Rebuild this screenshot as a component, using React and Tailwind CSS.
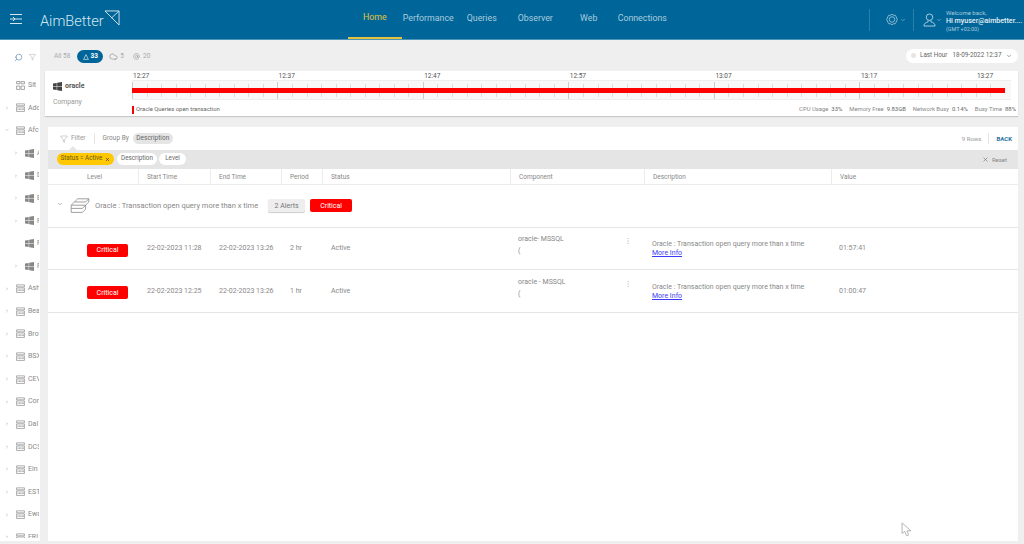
import { Search, Filter, ChevronDown, ChevronRight, X, MoreVertical, Cloud, AtSign } from 'lucide-react'

const NAV = [
  { label: 'Home', active: true },
  { label: 'Performance' },
  { label: 'Queries' },
  { label: 'Observer' },
  { label: 'Web' },
  { label: 'Connections' },
]

const TREE = [
  { name: 'Sit', icon: 'grid', noArrow: true },
  { name: 'Adc', icon: 'server' },
  { name: 'Afc', icon: 'server', open: true },
  { name: 'A', icon: 'win', sub: true },
  { name: 'D', icon: 'win', sub: true },
  { name: 'E', icon: 'win', sub: true },
  { name: 'F', icon: 'win', sub: true },
  { name: 'F', icon: 'win', sub: true, noArrow: true },
  { name: 'F', icon: 'win', sub: true },
  { name: 'Ash', icon: 'server' },
  { name: 'Bea', icon: 'server' },
  { name: 'Bro', icon: 'server' },
  { name: 'BSX', icon: 'server' },
  { name: 'CEV', icon: 'server' },
  { name: 'Con', icon: 'server' },
  { name: 'Dal', icon: 'server' },
  { name: 'DCS', icon: 'server' },
  { name: 'Ein', icon: 'server' },
  { name: 'EST', icon: 'server' },
  { name: 'Ewa', icon: 'server' },
  { name: 'FRI', icon: 'server' },
]

const TIMES = ['12:27', '12:37', '12:47', '12:57', '13:07', '13:17', '13:27']

const ROWS = [
  { start: '22-02-2023 11:28', end: '22-02-2023 13:26', period: '2 hr', comp: 'oracle- MSSQL', value: '01:57:41' },
  { start: '22-02-2023 12:25', end: '22-02-2023 13:26', period: '1 hr', comp: 'oracle - MSSQL', value: '01:00:47' },
]

const GRID = 'grid grid-cols-[90px_72px_71px_41px_188px_134px_187px_1fr]'

function WinIcon({ className }) {
  return (
    <svg viewBox="0 0 16 16" className={className} fill="currentColor">
      <path d="M0 2.6 6.6 1.6V7.5H0ZM7.4 1.5 16 0V7.5H7.4ZM0 8.4H6.6V14.4L0 13.4ZM7.4 8.4H16V16L7.4 14.6Z" />
    </svg>
  )
}

function ServerIcon() {
  return (
    <svg viewBox="0 0 16 16" className="w-[9px] h-[9px] shrink-0 text-[#888]" fill="none" stroke="currentColor" strokeWidth="1.2">
      <path d="M1 1.5H15V5H1ZM1 7H15V15H1Z" />
      <path d="M3.5 9.5V12.5M6 9.5V12.5M8.5 9.5V12.5M11 9.5V12.5M13 9.5V12.5" />
    </svg>
  )
}

function GridIcon() {
  return (
    <svg viewBox="0 0 16 16" className="w-[9px] h-[9px] shrink-0 text-[#888]" fill="none" stroke="currentColor" strokeWidth="1.3">
      <path d="M1 1H7V5H1ZM9 1H15V5H9ZM1 9H7V15H1ZM9 9H15V15H9Z" />
    </svg>
  )
}

function LayersIcon() {
  return (
    <svg viewBox="0 0 24 20" className="w-[20px] h-[16px] text-[#888]" fill="none" stroke="currentColor" strokeWidth="1">
      <path d="M6 4 9 1H23L19 5H5ZM5 5 1 9H19L23 5M1 9 1 13H15L19 9M1 13V18H15L19 14V9M23 1V5" />
    </svg>
  )
}

function GearIcon() {
  return (
    <svg viewBox="0 0 24 24" className="w-[12px] h-[13px] shrink-0 text-[#a9cbdd]" fill="none" stroke="currentColor" strokeWidth="1.6">
      <path d="M12 1.5 15 3.5H18.5L20.3 6.6 22.5 12 20.3 17.4 18.5 20.5H15L12 22.5 9 20.5H5.5L3.7 17.4 1.5 12 3.7 6.6 5.5 3.5H9Z" />
      <circle cx="12" cy="12" r="5.5" />
    </svg>
  )
}

function UserIcon() {
  return (
    <svg viewBox="0 0 14 15" className="w-[13px] h-[14px] shrink-0 text-[#b5d3e3]" fill="none" stroke="currentColor" strokeWidth="1">
      <circle cx="7" cy="4.5" r="3.5" />
      <path d="M5.5 8V9.5C3 10 1 11.5 1 14H13C13 11.5 11 10 8.5 9.5V8" />
    </svg>
  )
}

function Logo() {
  return (
    <div className="flex items-start ml-[17px] text-[#d5e6ef]">
      <span className="text-[14.6px] leading-[18px] font-light mt-[12px]">AimBetter</span>
      <svg viewBox="0 0 17 17" className="w-[16px] h-[16px] mt-[10px]" fill="none" stroke="currentColor" strokeWidth="1">
        <path d="M1 1H16V16L1 1M16 1 8 8.5" />
      </svg>
    </div>
  )
}

function Header() {
  return (
    <header className="h-[40px] shrink-0 bg-[#006699] border-b border-[#4d94b8] flex">
      <div className="w-[348px] shrink-0 flex">
        <div className="ml-[9px] mt-[13px] text-[#d5e6ef]">
          <svg viewBox="0 0 14 12" className="w-[14px] h-[12px]" fill="none" stroke="currentColor" strokeWidth="1">
            <path d="M1 1.5H13M6 6H13M1 10.5H13M1 6H6M4 4 6 6 4 8" />
          </svg>
        </div>
        <Logo />
      </div>
      <nav className="flex">
        {NAV.map(n => (
          <div
            key={n.label}
            className={`w-[53.5px] h-[39px] flex items-center justify-center whitespace-nowrap text-[8.8px] pb-[1px] ${n.active ? 'text-[#e4c33c] border-b-2 border-[#e4c33c]' : 'text-[#a9cbdd]'}`}
          >
            {n.label}
          </div>
        ))}
      </nav>
      <div className="flex-1" />
      <div className="flex items-center w-[155px] shrink-0">
        <div className="h-[22px] w-px bg-[#2b7fa8] mr-[16px]" />
        <GearIcon />
        <ChevronDown className="w-[6px] h-[6px] shrink-0 text-[#a9cbdd] ml-[2px]" />
        <div className="h-[22px] w-px bg-[#2b7fa8] ml-[7px] mr-[9px]" />
        <UserIcon />
        <ChevronDown className="w-[6px] h-[6px] shrink-0 text-[#a9cbdd] mr-[4px]" />
        <div className="flex flex-col leading-[8px] whitespace-nowrap mt-[2px]">
          <span className="text-[6px] text-[#a9cbdd]">Welcome back,</span>
          <span className="text-[7.1px] text-[#e8f1f6] font-medium">Hi myuser@aimbetter....</span>
          <span className="text-[5.4px] text-[#a9cbdd]">(GMT +02:00)</span>
        </div>
      </div>
    </header>
  )
}

function Sidebar() {
  return (
    <aside className="w-[40px] shrink-0 bg-white mb-[3px] overflow-hidden">
      <div className="flex items-center gap-[6px] pl-[14px] h-[32px] mt-[1px]">
        <Search className="w-[9px] h-[9px] text-[#4d7fb0] -scale-x-100" strokeWidth={1.6} />
        <Filter className="w-[7px] h-[8px] text-[#888]" strokeWidth={1.2} />
      </div>
      <div className="h-[464px] mt-[1px] overflow-hidden">
        {TREE.map((t, i) => (
          <div key={i} className={`h-[22.6px] w-[38.5px] overflow-hidden flex items-center whitespace-nowrap ${t.sub ? 'pl-[14px]' : 'pl-[5px]'}`}>
            <span className="w-[11px] shrink-0">
              {!t.noArrow && (t.open
                ? <ChevronDown className="w-[4px] h-[4px] text-[#999]" strokeWidth={3} />
                : <ChevronRight className="w-[4px] h-[4px] text-[#999]" strokeWidth={3} />)}
            </span>
            {t.icon === 'grid' && <GridIcon />}
            {t.icon === 'server' && <ServerIcon />}
            {t.icon === 'win' && <WinIcon className="w-[9px] h-[9px] shrink-0 text-[#888]" />}
            <span className="text-[7px] text-[#888] ml-[3px]">{t.name}</span>
          </div>
        ))}
      </div>
    </aside>
  )
}

function TopStrip() {
  return (
    <div className="h-[31px] shrink-0 flex items-center pt-[2px] pl-[14px] pr-[6px] text-[6.5px] text-[#aaa]">
      <span>All 58</span>
      <span className="ml-[7px] w-[26px] h-[13px] rounded-full bg-[#006699] text-white flex items-center justify-center gap-[2px] font-bold">
        <svg viewBox="0 0 10 10" className="w-[6px] h-[6px]" fill="none" stroke="currentColor"><path d="M5 1 9 9H1Z" /></svg>
        33
      </span>
      <Cloud className="w-[9px] h-[9px] ml-[6px] mr-[2px] text-[#999]" />
      <span>5</span>
      <AtSign className="w-[7px] h-[7px] ml-[9px] mr-[3px] text-[#999]" />
      <span>20</span>
      <div className="flex-1" />
      <div className="w-[112px] h-[14px] -mt-[2px] rounded-full bg-white flex items-center pl-[5px] text-[#666] text-[6.3px] whitespace-nowrap">
        <span className="w-[5px] h-[5px] rounded-full bg-[#e5e5e5] mr-[4px]" />
        <span>Last Hour</span>
        <span className="ml-[5px]">18-09-2022 12:37</span>
        <ChevronDown className="w-[6px] h-[6px] ml-[5px]" strokeWidth={2.4} />
      </div>
    </div>
  )
}

function Timeline() {
  return (
    <div className="flex-1 min-w-0">
      <div className="flex h-[9px] text-[6.5px] leading-[10px] pl-[1px] text-[#555]">
        {TIMES.map((t, i) => (
          <span key={t} className={i === 6 ? 'w-[30px] -ml-[29.6px]' : 'w-[145.6px]'}>{t}</span>
        ))}
      </div>
      <div className="relative h-[20px] w-[879px] bg-[#f8f8f8] border-y border-[#eeeeee] flex items-center">
        {Array.from({ length: 60 }, (_, i) => (
          <div key={i} className="w-[14.56px] shrink-0 flex items-center">
            <div className={`w-px ${i % 10 === 0 ? 'h-[17px] bg-[#cccccc]' : 'h-[13px] bg-[#dcdcdc]'}`} />
          </div>
        ))}
        <div className="absolute left-0 top-[6.5px] h-[5px] w-[873px] bg-[#ff0000]" />
      </div>
      <div className="flex items-center h-[16px] pt-[3px] text-[5.9px] text-[#888] whitespace-nowrap">
        <span className="w-[2px] h-[8px] bg-[#ff0000] mr-[2px]" />
        <span className="text-[#666]">Oracle Queries open transaction</span>
        <div className="flex-1" />
        <div className="flex gap-[7px] pr-[2px]">
          <span>CPU Usage&nbsp; <span className="text-[#666]">33%</span></span>
          <span>Memory Free&nbsp; <span className="text-[#666]">9.83GB</span></span>
          <span>Network Busy&nbsp; <span className="text-[#666]">0.14%</span></span>
          <span>Busy Time&nbsp; <span className="text-[#666]">88%</span></span>
        </div>
      </div>
    </div>
  )
}

function CompanyCard() {
  return (
    <div className="h-[45px] shrink-0 ml-[5px] mr-[6px] bg-white shadow-[0_1px_1px_#c8c8c8] flex">
      <div className="w-[87px] shrink-0 pl-[8px] pt-[10px]">
        <div className="flex items-center gap-[3px]">
          <WinIcon className="w-[9px] h-[9px] text-[#444]" />
          <span className="text-[7px] font-bold text-[#555]">oracle</span>
        </div>
        <div className="text-[6.8px] text-[#999] mt-[5px]">Company</div>
      </div>
      <Timeline />
    </div>
  )
}

function FilterBar() {
  return (
    <div className="relative h-[23px] shrink-0 flex items-center text-[6.5px] text-[#888]">
      <Filter className="w-[8px] h-[8px] ml-[12px] text-[#888]" strokeWidth={1.2} />
      <span className="ml-[3px] text-[#999]">Filter</span>
      <span className="w-px h-[11px] bg-[#e5e5e5] ml-[8px]" />
      <span className="ml-[8px]">Group By</span>
      <span className="ml-[4px] w-[40px] h-[11px] rounded-full bg-[#e5e5e5] flex items-center justify-center text-[#666]">Description</span>
      <div className="flex-1" />
      <span className="text-[6px] text-[#999]">9 Rows</span>
      <span className="w-px h-[11px] bg-[#e5e5e5] mx-[7px]" />
      <span className="text-[6px] font-bold text-[#2a6f9e] mr-[6px]">BACK</span>
      <span className="absolute left-[21px] bottom-0 w-0 h-0 border-x-[4px] border-x-transparent border-b-[4px] border-b-[#e5e5e5]" />
    </div>
  )
}

function ChipsBar() {
  return (
    <div className="h-[19px] shrink-0 bg-[#e5e5e5] flex items-center pb-[1px] pl-[9px] pr-[11px] text-[6.3px] text-[#666] whitespace-nowrap">
      <span className="h-[12px] w-[57px] rounded-full bg-[#ffc800] flex items-center justify-center gap-[3px] text-[#6b5a10]">
        Status = Active <X className="w-[5px] h-[5px] text-[#333]" strokeWidth={3} />
      </span>
      <span className="h-[12px] w-[40px] rounded-full bg-white flex items-center justify-center ml-[3px]">Description</span>
      <span className="h-[12px] w-[27px] rounded-full bg-white flex items-center justify-center ml-[2px]">Level</span>
      <div className="flex-1" />
      <X className="w-[7px] h-[7px] text-[#555]" strokeWidth={1.6} />
      <span className="ml-[3px] text-[6px] text-[#888]">Reset</span>
    </div>
  )
}

function HeadCell({ children, first }) {
  return (
    <div className={`h-[15px] pt-[2px] flex items-center text-[6.5px] text-[#888] ${first ? 'pl-[39px]' : 'pl-[8px] border-l border-[#ececec]'}`}>
      {children}
    </div>
  )
}

function Critical({ className }) {
  return (
    <span className={`h-[13px] rounded-[2px] bg-[#ff0000] text-white text-[7px] flex items-center justify-center ${className}`}>Critical</span>
  )
}

function AlertRow({ r }) {
  return (
    <div className={`${GRID} h-[42.5px] border-b border-[#e6e6e6] text-[7px] text-[#888] items-center`}>
      <div className="pl-[39px]"><Critical className="w-[41px] mt-[4px]" /></div>
      <div className="pl-[9px]">{r.start}</div>
      <div className="pl-[9px]">{r.end}</div>
      <div className="pl-[9px]">{r.period}</div>
      <div className="pl-[9px]">Active</div>
      <div className="pl-[8px] flex leading-[12px] -mt-[6px]">
        <div className="w-[106px]">
          <div>{r.comp}</div>
          <div>(</div>
        </div>
        <MoreVertical className="w-[8px] h-[10px] text-[#ccc] mt-[3px]" />
      </div>
      <div className="pl-[8px] leading-[9px] mt-[2px] whitespace-nowrap">
        <div>Oracle : Transaction open query more than x time</div>
        <div className="text-[#3b3bf5] underline">More Info</div>
      </div>
      <div className="pl-[8px]">{r.value}</div>
    </div>
  )
}

function Table() {
  return (
    <div className="flex-1 min-h-0 ml-[8px] mr-[6px] mt-[11px] mb-[3px] bg-white flex flex-col">
      <FilterBar />
      <ChipsBar />
      <div className={`${GRID} border-b border-[#ececec] shrink-0`}>
        <HeadCell first>Level</HeadCell>
        <HeadCell>Start Time</HeadCell>
        <HeadCell>End Time</HeadCell>
        <HeadCell>Period</HeadCell>
        <HeadCell>Status</HeadCell>
        <HeadCell>Component</HeadCell>
        <HeadCell>Description</HeadCell>
        <HeadCell>Value</HeadCell>
      </div>
      <div className="h-[42.5px] shrink-0 border-b border-[#e6e6e6] flex items-center pl-[9px] whitespace-nowrap">
        <ChevronDown className="w-[6px] h-[6px] text-[#888] -mt-[3px]" strokeWidth={2.4} />
        <span className="ml-[7px]"><LayersIcon /></span>
        <span className="ml-[5px] text-[7.5px] text-[#888]">Oracle : Transaction open query more than x time</span>
        <span className="ml-[10px] w-[37px] h-[13px] rounded-[2px] bg-[#eeeeee] shadow-[0_1px_1px_#ccc] text-[7px] text-[#777] flex items-center justify-center">2 Alerts</span>
        <Critical className="ml-[5px] w-[42px]" />
      </div>
      {ROWS.map(r => <AlertRow key={r.value} r={r} />)}
      <div className="relative flex-1">
        <svg viewBox="0 0 12 18" className="absolute left-[853px] top-[209px] w-[11px] h-[16px] text-[#aaa]" fill="#fff" stroke="currentColor" strokeWidth="1">
          <path d="M1 1V13L4 10.5 6 15.5 8.5 14.5 6.5 10H11Z" />
        </svg>
      </div>
    </div>
  )
}

export default function App() {
  return (
    <div className="w-[1024px] h-[544px] overflow-hidden flex flex-col bg-[#efefef] font-['Roboto',sans-serif]">
      <Header />
      <div className="flex-1 min-h-0 flex">
        <Sidebar />
        <main className="flex-1 min-w-0 flex flex-col">
          <TopStrip />
          <CompanyCard />
          <Table />
        </main>
      </div>
    </div>
  )
}
